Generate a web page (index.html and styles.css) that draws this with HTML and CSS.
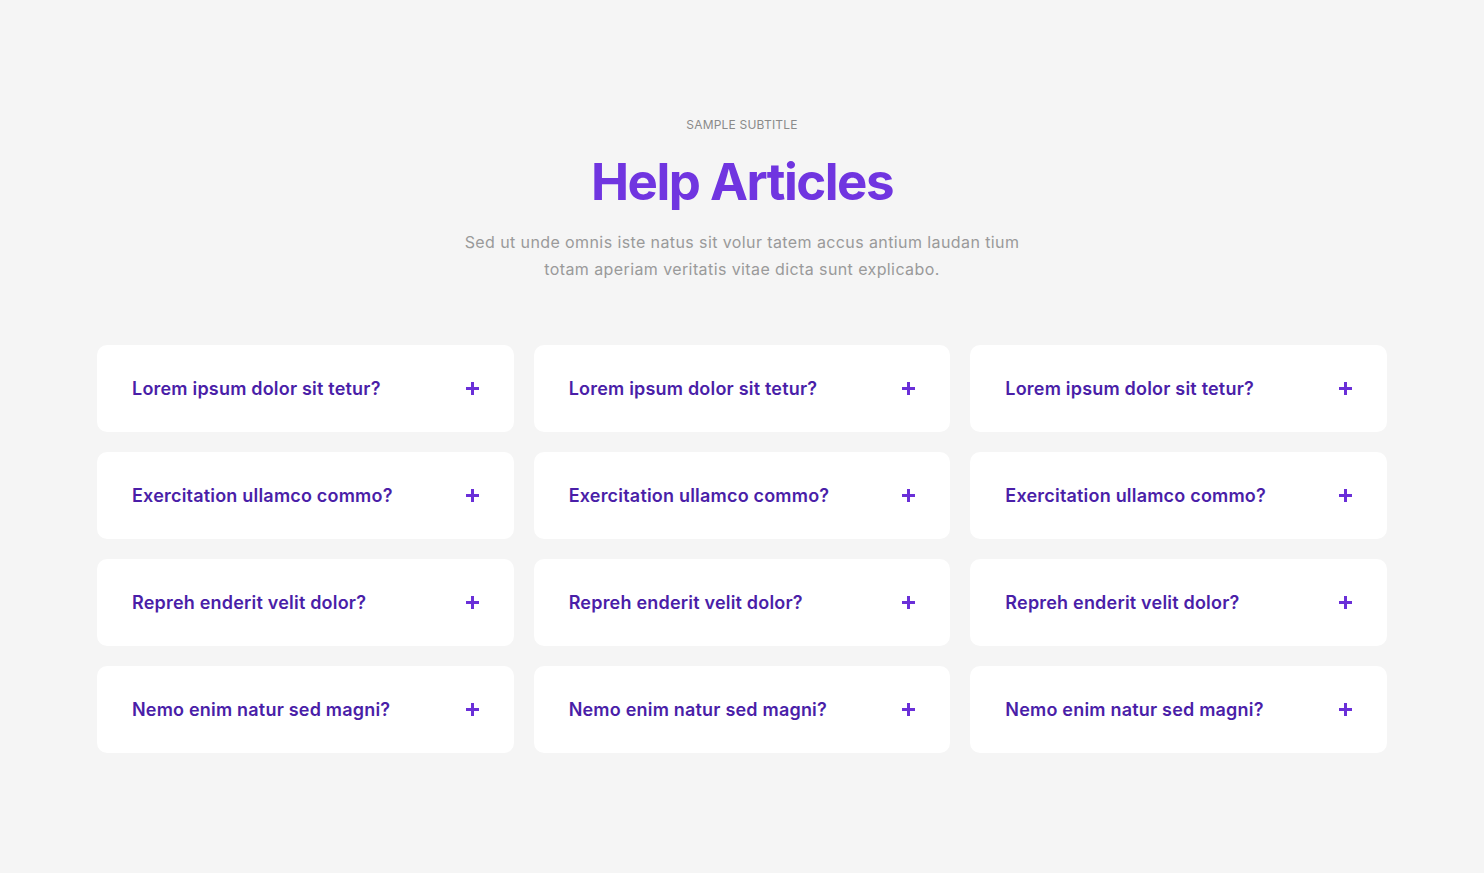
FILE: index.html
```html
<!DOCTYPE html>
<html lang="en">
<head>
<meta charset="utf-8">
<title>Help Articles</title>
<link rel="stylesheet" href="styles.css">
</head>
<body>
<section class="help">
  <header class="help-head">
    <p class="subtitle">SAMPLE SUBTITLE</p>
    <h1 class="title">Help Articles</h1>
    <p class="lead">Sed ut unde omnis iste natus sit volur tatem accus antium laudan tium<br>totam aperiam veritatis vitae dicta sunt explicabo.</p>
  </header>
  <div class="grid">
    <div class="card"><span class="q">Lorem ipsum dolor sit tetur?</span><span class="plus"></span></div>
    <div class="card"><span class="q">Lorem ipsum dolor sit tetur?</span><span class="plus"></span></div>
    <div class="card"><span class="q">Lorem ipsum dolor sit tetur?</span><span class="plus"></span></div>
    <div class="card"><span class="q">Exercitation ullamco commo?</span><span class="plus"></span></div>
    <div class="card"><span class="q">Exercitation ullamco commo?</span><span class="plus"></span></div>
    <div class="card"><span class="q">Exercitation ullamco commo?</span><span class="plus"></span></div>
    <div class="card"><span class="q">Repreh enderit velit dolor?</span><span class="plus"></span></div>
    <div class="card"><span class="q">Repreh enderit velit dolor?</span><span class="plus"></span></div>
    <div class="card"><span class="q">Repreh enderit velit dolor?</span><span class="plus"></span></div>
    <div class="card"><span class="q">Nemo enim natur sed magni?</span><span class="plus"></span></div>
    <div class="card"><span class="q">Nemo enim natur sed magni?</span><span class="plus"></span></div>
    <div class="card"><span class="q">Nemo enim natur sed magni?</span><span class="plus"></span></div>
  </div>
</section>
</body>
</html>
```
FILE: styles.css
```css
* { box-sizing: border-box; }
html, body { margin: 0; padding: 0; }
body {
  background: #f5f5f5;
  font-family: Inter, "Noto Sans", sans-serif;
}
.help {
  padding: 116px 97px 0;
}
.help-head {
  text-align: center;
}
.subtitle {
  margin: 0;
  font-size: 12px;
  line-height: 18px;
  color: #8a8a8a;
  letter-spacing: 0.2px;
}
.title {
  margin: 17px 0 0;
  font-size: 51px;
  line-height: 62px;
  font-weight: 700;
  color: #7035e0;
  letter-spacing: -1.5px;
}
.lead {
  margin: 16px 0 0;
  font-size: 16px;
  line-height: 27px;
  color: #9a9a9a;
  letter-spacing: 0.4px;
}
.grid {
  margin-top: 62px;
  display: grid;
  grid-template-columns: repeat(3, 1fr);
  gap: 20px;
}
.card {
  background: #ffffff;
  border-radius: 10px;
  height: 87px;
  padding: 0 35px;
  display: flex;
  align-items: center;
  justify-content: space-between;
}
.q {
  font-size: 18px;
  font-weight: 600;
  color: #4a1ea8;
  letter-spacing: 0.2px;
}
.plus {
  position: relative;
  width: 13px;
  height: 13px;
  flex: none;
}
.plus::before, .plus::after {
  content: "";
  position: absolute;
  background: #6a2fd8;
}
.plus::before { left: 0; right: 0; top: 5px; height: 3px; }
.plus::after { top: 0; bottom: 0; left: 5px; width: 3px; }
```
